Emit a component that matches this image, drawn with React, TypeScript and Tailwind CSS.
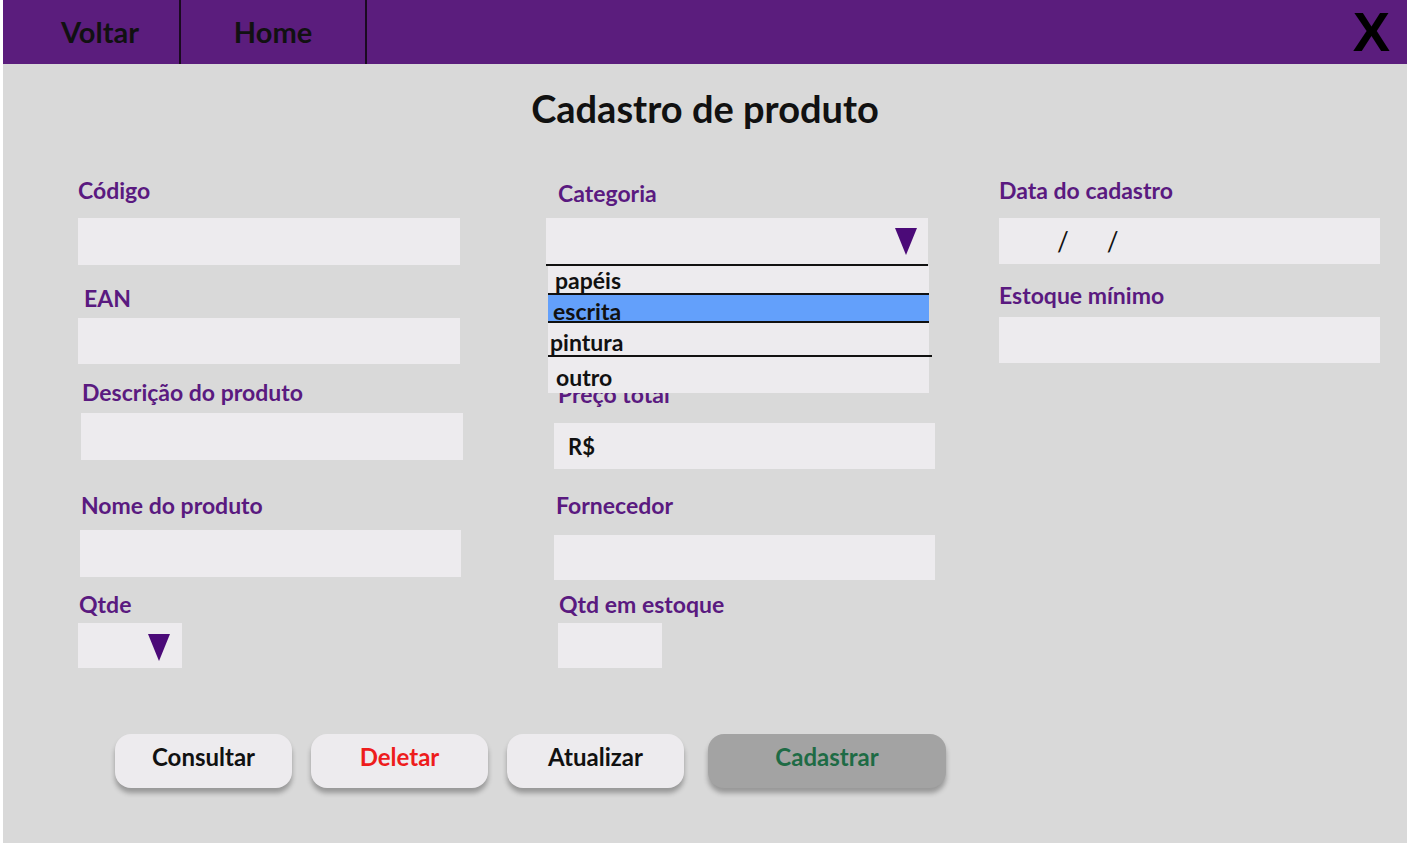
import React from 'react';

const font = { fontFamily: 'Lato, "Open Sans", sans-serif' };

function Label({ text, className = '' }: { text: string; className?: string }) {
  return <div className={`h-7 leading-7 text-[23px] font-bold text-[#5a1a80] whitespace-nowrap ${className}`}>{text}</div>;
}

function Triangle({ className = '' }: { className?: string }) {
  return (
    <svg viewBox="0 0 22 27" className={`w-[22px] h-[27px] ${className}`}>
      <polygon points="0,0 22,0 11,27" fill="#4b0a78" />
    </svg>
  );
}

const options = [
  { name: 'papéis', row: 'h-[27px] pl-[7px] bg-[#edebee] leading-[26px]', line: 'ml-[2px] mr-0' },
  { name: 'escrita', row: 'h-[26px] pl-[5px] bg-[#63a0fb] leading-[20px]', line: 'ml-[2px] mr-0' },
  { name: 'pintura', row: 'h-[32px] pl-[2px] bg-[#edebee] leading-[26px]', line: 'ml-[2px] -mr-[3px]' },
];

export default function App() {
  return (
    <div className="w-[1407px] h-[843px] bg-white pl-[3px] overflow-hidden" style={font}>
      <div className="h-full bg-[#d9d9d9] flex flex-col">
        {/* top bar */}
        <div className="h-[64px] bg-[#5b1d7d] flex items-stretch text-[#111] text-[29px] font-bold">
          <div className="w-[178px] flex items-center justify-center pl-[18px] border-r-2 border-[#1a0a20]">Voltar</div>
          <div className="w-[186px] flex items-center justify-center border-r-2 border-[#1a0a20]">Home</div>
          <div className="flex-1 flex items-center justify-end pr-[17px]">
            <span className="text-[56px] font-bold leading-none text-black" style={{ fontFamily: '"Liberation Sans", Arial, sans-serif' }}>X</span>
          </div>
        </div>

        <h1 className="mt-[22px] h-[44px] leading-[44px] text-center text-[38px] font-bold text-[#111]">Cadastro de produto</h1>

        <div className="flex items-start pl-[75px]">
          {/* col 1 */}
          <div className="w-[385px] flex flex-col">
            <Label text="Código" className="mt-[46px]" />
            <div className="mt-[14px] h-[47px] w-[382px] bg-[#edebee]" />
            <Label text="EAN" className="mt-[19px] ml-[6px]" />
            <div className="mt-[6px] h-[46px] w-[382px] bg-[#edebee]" />
            <Label text="Descrição do produto" className="mt-[14px] ml-[4px]" />
            <div className="mt-[7px] ml-[3px] h-[47px] w-[382px] bg-[#edebee]" />
            <Label text="Nome do produto" className="mt-[31px] ml-[3px]" />
            <div className="mt-[11px] ml-[2px] h-[47px] w-[381px] bg-[#edebee]" />
            <Label text="Qtde" className="mt-[13px] ml-[1px]" />
            <div className="mt-[5px] h-[45px] w-[104px] bg-[#edebee] flex items-center justify-end pr-[12px] pt-[3px]">
              <Triangle />
            </div>
          </div>

          {/* col 2 */}
          <div className="ml-[83px] w-[390px] flex flex-col">
            <Label text="Categoria" className="mt-[49px] ml-[12px]" />
            <div className="relative mt-[11px] h-[47px] w-[382px] bg-[#edebee] flex items-center justify-end pr-[11px]">
              <Triangle />
              <div className="absolute left-0 top-[46px] w-[383px] text-[23px] font-bold text-[#111]">
                <div className="h-[2px] bg-[#111] w-[382px]" />
                {options.map(o => (
                  <div key={o.name}>
                    <div className={`ml-[2px] w-[381px] flex items-end ${o.row}`}>{o.name}</div>
                    <div className={`h-[2px] bg-[#111] ${o.line}`} />
                  </div>
                ))}
                <div className="ml-[2px] w-[381px] h-[36px] bg-[#edebee] pl-[8px] leading-[40px]">outro</div>
              </div>
            </div>
            <Label text="Preço total" className="mt-[115px] ml-[12px]" />
            <div className="mt-[15px] ml-[8px] h-[46px] w-[381px] bg-[#edebee] flex items-center pl-[14px] text-[22px] font-bold text-[#111]">R$</div>
            <Label text="Fornecedor" className="mt-[22px] ml-[10px]" />
            <div className="mt-[16px] ml-[8px] h-[45px] w-[381px] bg-[#edebee]" />
            <Label text="Qtd em estoque" className="mt-[10px] ml-[13px]" />
            <div className="mt-[5px] ml-[12px] h-[45px] w-[104px] bg-[#edebee]" />
          </div>

          {/* col 3 */}
          <div className="ml-[63px] w-[381px] flex flex-col">
            <Label text="Data do cadastro" className="mt-[46px]" />
            <div className="mt-[14px] h-[46px] w-[381px] bg-[#edebee] flex items-center text-[26px] text-[#111] pl-[58px] gap-[38px]">
              <span>/</span>
              <span>/</span>
            </div>
            <Label text="Estoque mínimo" className="mt-[17px]" />
            <div className="mt-[8px] h-[46px] w-[381px] bg-[#edebee]" />
          </div>
        </div>

        {/* buttons */}
        <div className="mt-[66px] ml-[112px] flex items-start text-[24px] font-bold">
          <button className="w-[177px] h-[54px] rounded-[16px] bg-[#edebee] text-[#111] pb-[8px] shadow-[0_5px_5px_rgba(0,0,0,0.3)]">Consultar</button>
          <button className="ml-[19px] w-[177px] h-[54px] rounded-[16px] bg-[#edebee] text-[#ee1c1c] pb-[8px] shadow-[0_5px_5px_rgba(0,0,0,0.3)]">Deletar</button>
          <button className="ml-[19px] w-[177px] h-[54px] rounded-[16px] bg-[#edebee] text-[#111] pb-[8px] shadow-[0_5px_5px_rgba(0,0,0,0.3)]">Atualizar</button>
          <button className="ml-[24px] w-[238px] h-[54px] rounded-[16px] bg-[#a3a3a3] text-[#1e6b45] pb-[8px] shadow-[0_5px_5px_rgba(0,0,0,0.3)]">Cadastrar</button>
        </div>
      </div>
    </div>
  );
}
